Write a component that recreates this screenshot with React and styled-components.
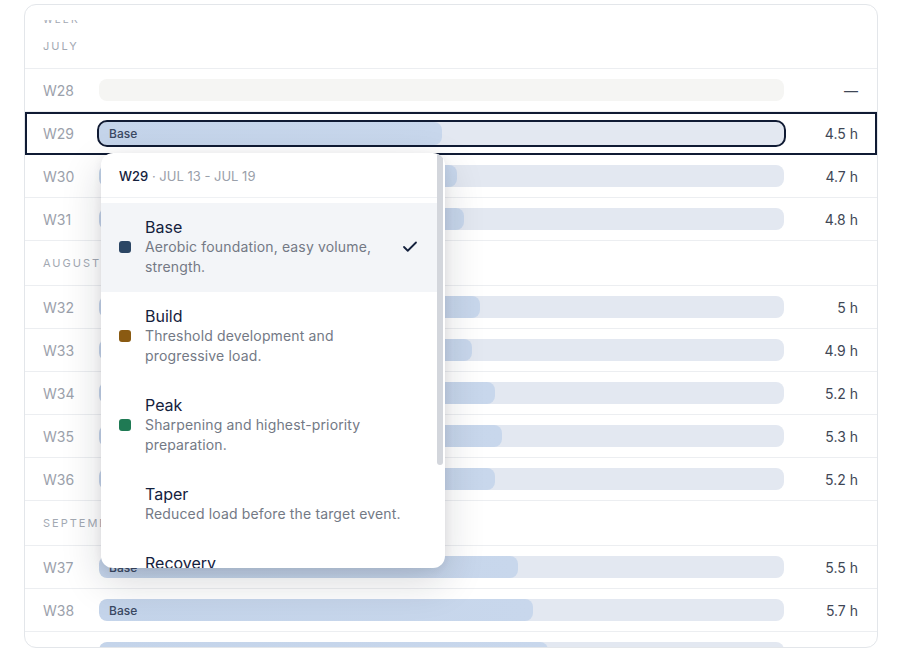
import React, { useLayoutEffect, useRef } from "react";
import styled, { createGlobalStyle } from "styled-components";
import { Check } from "lucide-react";

const Global = createGlobalStyle`
  html, body { margin: 0; padding: 0; background: #ffffff; }
  body { font-family: Inter, "Open Sans", sans-serif; color: #14213d; }
  * { box-sizing: border-box; }
`;

const Page = styled.div`
  padding: 4px 24px 10px;
`;

const Card = styled.div`
  height: 644px;
  border: 1px solid #e3e6ea;
  border-radius: 12px;
  background: #fff;
  overflow: hidden;
  padding-top: 15px;
  display: flex;
  flex-direction: column;
`;

const Scroller = styled.div`
  flex: 1;
  overflow-y: auto;
  scrollbar-width: none;
  &::-webkit-scrollbar { display: none; }
`;

const ColumnHead = styled.div`
  height: 36px;
  display: flex;
  align-items: flex-end;
  padding: 0 18px;
  font-size: 10px;
  line-height: 10px;
  letter-spacing: 2px;
  color: #a2a8b2;
  text-transform: uppercase;
`;

const MonthHeader = styled.div`
  height: 45px;
  display: flex;
  align-items: center;
  padding: 0 18px;
  border-bottom: 1px solid #eceef1;
  font-size: 11px;
  letter-spacing: 2px;
  color: #a3a9b3;
  text-transform: uppercase;
`;

const Row = styled.div`
  position: relative;
  height: 43px;
  display: grid;
  grid-template-columns: 56px 1fr 74px;
  align-items: center;
  padding: 0 19px 0 18px;
  border-bottom: 1px solid #eceef1;
  outline: ${(p) => (p.$selected ? "2px solid #101b34" : "none")};
  outline-offset: -2px;
  z-index: ${(p) => (p.$selected ? 5 : "auto")};
`;

const Week = styled.span`
  font-size: 14px;
  color: #9ba1ab;
`;

const Value = styled.span`
  font-size: 14px;
  color: #3f4756;
  text-align: right;
`;

const BarCell = styled.div`
  position: relative;
  height: ${(p) => (p.$focused ? 23 : 22)}px;
`;

const Track = styled.div`
  height: 100%;
  border-radius: 8px;
  background: ${(p) => (p.$empty ? "#f5f5f3" : "#e3e8f1")};
  overflow: hidden;
  display: flex;
  outline: ${(p) => (p.$focused ? "2px solid #101b34" : "none")};
`;

const Fill = styled.div`
  height: 100%;
  border-radius: 8px;
  background: linear-gradient(90deg, #c4d4ea 0%, #c8d7ec 100%);
  display: flex;
  align-items: center;
  padding-left: 10px;
  font-size: 12px;
  font-weight: 500;
  color: #3a4862;
  white-space: nowrap;
`;

const Popover = styled.div`
  position: absolute;
  top: calc(100% + 8px);
  left: 2px;
  width: 344px;
  height: 415px;
  background: #fff;
  border-radius: 12px;
  box-shadow: 0 14px 40px rgba(16, 24, 40, 0.16), 0 2px 10px rgba(16, 24, 40, 0.07);
  overflow: hidden;
  z-index: 20;
  display: grid;
  grid-template-columns: 1fr 8px;
`;

const PopBody = styled.div`
  overflow: hidden;
`;

const ScrollRail = styled.div`
  padding: 0 2px 0 0;
  display: flex;
  flex-direction: column;
`;

const ScrollThumb = styled.div`
  height: ${(p) => p.$h}px;
  border-radius: 3px;
  background: #d3d6dc;
`;

const PopHeader = styled.div`
  height: 45px;
  display: flex;
  align-items: center;
  padding: 3px 18px 0;
  border-bottom: 1px solid #eff1f4;
  font-size: 13px;
  color: #9aa0aa;
  b { color: #14213d; font-weight: 500; }
`;

const List = styled.div`
  padding: 5px 0;
`;

const Option = styled.div`
  display: grid;
  grid-template-columns: ${(p) => (p.$active ? "12px 1fr 18px" : "12px 1fr")};
  column-gap: 14px;
  align-items: center;
  padding: 14px 18px 15px 18px;
  background: ${(p) => (p.$active ? "#f3f5f8" : "transparent")};
`;

const Dot = styled.span`
  width: 12px;
  height: 12px;
  border-radius: 3px;
  background: ${(p) => p.$color};
`;

const OptText = styled.div`
  display: flex;
  flex-direction: column;
  max-width: 262px;
`;

const OptTitle = styled.span`
  font-size: 16px;
  line-height: 20px;
  font-weight: 400;
  color: #14213d;
`;

const OptDesc = styled.span`
  font-size: 14px;
  letter-spacing: 0.15px;
  line-height: 20px;
  color: #737985;
`;

const CheckMark = styled.span`
  display: flex;
  color: #14213d;
`;

const MAX = 9;

const phases = [
  { name: "Base", color: "#2b4664", desc: "Aerobic foundation, easy volume, strength." },
  { name: "Build", color: "#8a5a12", desc: "Threshold development and progressive load." },
  { name: "Peak", color: "#1f7a54", desc: "Sharpening and highest-priority preparation." },
  { name: "Taper", color: "#ffffff", desc: "Reduced load before the target event." },
  { name: "Recovery", color: "#ffffff", desc: "Active rest and regeneration after racing." },
];

const sections = [
  {
    month: "July",
    weeks: [
      { w: "W28", v: null },
      { w: "W29", v: 4.5, selected: true },
      { w: "W30", v: 4.7 },
      { w: "W31", v: 4.8 },
    ],
  },
  {
    month: "August",
    weeks: [
      { w: "W32", v: 5 },
      { w: "W33", v: 4.9 },
      { w: "W34", v: 5.2 },
      { w: "W35", v: 5.3 },
      { w: "W36", v: 5.2 },
    ],
  },
  {
    month: "September",
    weeks: [
      { w: "W37", v: 5.5 },
      { w: "W38", v: 5.7 },
      { w: "W39", v: 5.9 },
    ],
  },
];

function PhaseMenu() {
  return (
    <Popover>
      <PopBody>
        <PopHeader>
          <span>
            <b>W29</b> · JUL 13 - JUL 19
          </span>
        </PopHeader>
        <List>
          {phases.map((p, i) => (
            <Option key={p.name} $active={i === 0}>
              <Dot $color={p.color} />
              <OptText>
                <OptTitle>{p.name}</OptTitle>
                <OptDesc>{p.desc}</OptDesc>
              </OptText>
              {i === 0 && (
                <CheckMark>
                  <Check size={18} strokeWidth={2.4} />
                </CheckMark>
              )}
            </Option>
          ))}
        </List>
      </PopBody>
      <ScrollRail>
        <ScrollThumb $h={312} />
      </ScrollRail>
    </Popover>
  );
}

function WeekRow({ w, v, selected }) {
  return (
    <Row $selected={selected}>
      <Week>{w}</Week>
      <BarCell $focused={selected}>
        <Track $empty={v == null} $focused={selected}>
          {v != null && <Fill style={{ width: `${(v / MAX) * 100}%` }}>Base</Fill>}
        </Track>
        {selected && <PhaseMenu />}
      </BarCell>
      <Value>{v == null ? "—" : `${v} h`}</Value>
    </Row>
  );
}

export default function App() {
  const ref = useRef(null);
  useLayoutEffect(() => {
    if (ref.current) ref.current.scrollTop = 32;
  }, []);
  return (
    <Page>
      <Global />
      <Card>
        <Scroller ref={ref}>
          <ColumnHead>Week</ColumnHead>
          {sections.map((s) => (
            <React.Fragment key={s.month}>
              <MonthHeader>{s.month}</MonthHeader>
              {s.weeks.map((wk) => (
                <WeekRow key={wk.w} {...wk} />
              ))}
            </React.Fragment>
          ))}
        </Scroller>
      </Card>
    </Page>
  );
}
